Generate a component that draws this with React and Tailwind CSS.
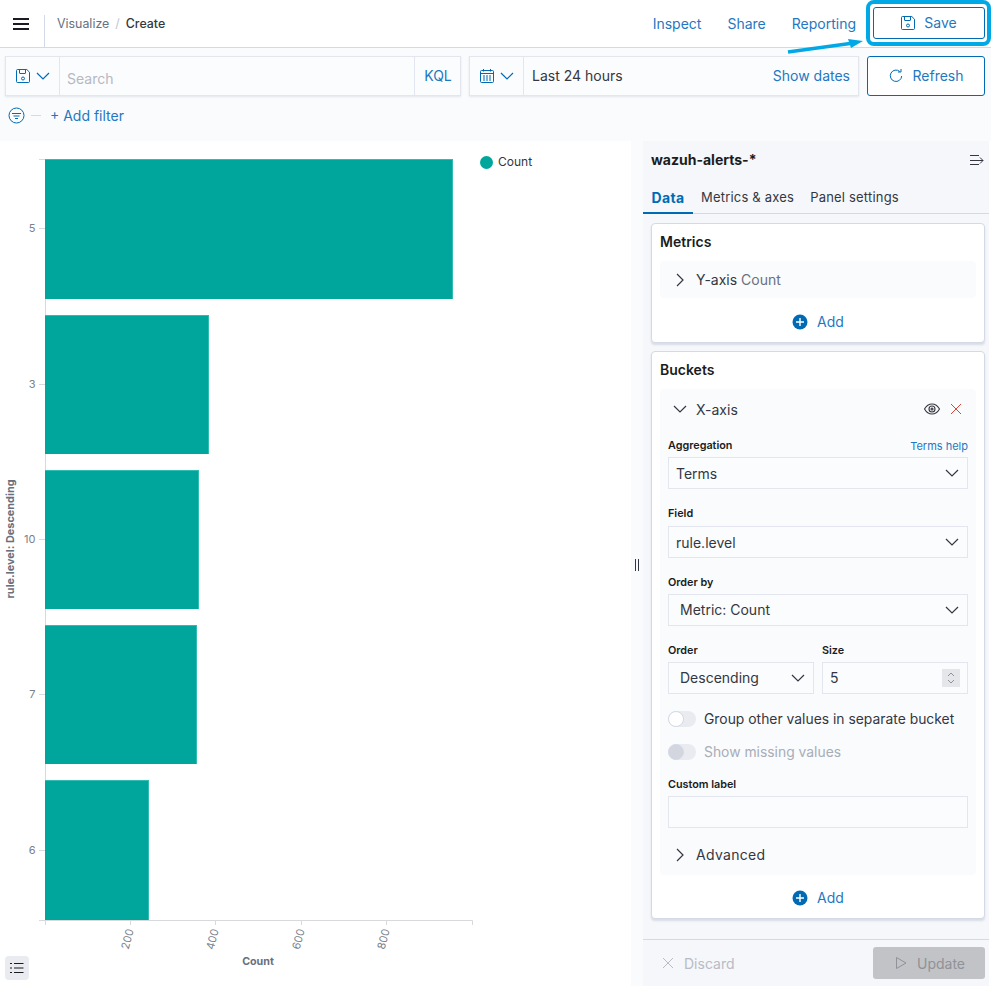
import React from "react";

const BLUE = "#006bb4";

function SaveIcon({ size = 16, color = BLUE }) {
  return (
    <svg width={size} height={size} viewBox="0 0 16 16" fill="none" stroke={color} strokeWidth="1">
      <path d="M1.5 2.5a1 1 0 0 1 1-1h9.3l2.7 2.7v9.3a1 1 0 0 1-1 1h-11a1 1 0 0 1-1-1z" />
      <path d="M4.5 1.500v3.500a.5.5 0 0 0 .5.5h5a.5.5 0 0 0 .5-.5V1.500" />
      <circle cx="8" cy="10.500" r="1.500" />
    </svg>
  );
}

function Chevron({ dir = "down", size = 16, color = "#343741" }) {
  const d = dir === "down" ? "M2 5 8 11l6-6" : "M5 2 11 8l-6 6";
  return (
    <svg width={size} height={size} viewBox="0 0 16 16" fill="none" stroke={color} strokeWidth="1.2">
      <path d={d} />
    </svg>
  );
}

function PlusCircle() {
  return (
    <svg width="16" height="16" viewBox="0 0 16 16">
      <circle cx="8" cy="8" r="7.500" fill={BLUE} />
      <path d="M8 4v8M4 8h8" stroke="#fff" strokeWidth="1.4" />
    </svg>
  );
}

function Label({ children, className = "" }) {
  return <div className={`text-[10.8px] leading-[16px] font-semibold text-[#1a1c21] ${className}`}>{children}</div>;
}

function SelectBox({ children, pad = "pl-[7px]", textClass = "pb-[1px]", className = "" }) {
  return (
    <div className={`h-[32px] bg-[#fbfcfd] border border-[#e3e6ef] flex items-center justify-between ${pad} pr-[7px] text-[14px] text-[#343741] ${className}`}>
      <span className={textClass}>{children}</span>
      <Chevron />
    </div>
  );
}

function Toggle({ disabled, children }) {
  return (
    <div className="h-[20px] flex items-center gap-[8px]">
      <div className="relative w-[28px] h-[16px] rounded-full bg-[#e9ebf0]">
        <div
          className={`absolute left-0 top-0 w-[16px] h-[16px] rounded-full ${
            disabled ? "bg-[#d3d6df] border border-[#d3dae6]" : "bg-white border border-[#d3dae6]"
          }`}
        />
      </div>
      <span className={`text-[13.88px] ${disabled ? "text-[#a8adb8]" : "text-[#343741]"}`}>{children}</span>
    </div>
  );
}

function AddButton() {
  return (
    <div className="flex items-center justify-center gap-[9px] text-[14px] text-[#1f78c1]">
      <PlusCircle />
      <span>Add</span>
    </div>
  );
}

function Chart() {
  const bars = [
    [159, 140, 408],
    [315, 139, 164],
    [470, 139, 154],
    [625, 139, 152],
    [780, 140, 104],
  ];
  const yTicks = [
    [228, "5"],
    [384, "3"],
    [539, "10"],
    [694, "7"],
    [850, "6"],
  ];
  const xTicks = [
    [130, "200"],
    [215, "400"],
    [301, "600"],
    [386, "800"],
  ];
  const font = { fontFamily: "Inter, sans-serif" };
  return (
    <svg width="631" height="845" viewBox="0 141 631 845" className="block">
      <path d="M45.500 159V920.500H472.500V925M39 159.500H45M39 920.500H45M45.500 920V925" fill="none" stroke="#d8d9dc" strokeWidth="1" />
      {bars.map(([y, h, w]) => (
        <g key={y}>
          <rect x="45" y={y} width={w} height={h} fill="#2fbdb3" />
          <rect x="45" y={y + 1} width={w - 1} height={h - 1} fill="#00a69b" />
        </g>
      ))}
      {yTicks.map(([y, t]) => (
        <g key={t}>
          <path d={`M39 ${y + 0.5}H45`} stroke="#d8d9dc" />
          <text x="35.500" y={y + 4} textAnchor="end" fontSize="11" fill="#7a808c" style={font}>
            {t}
          </text>
        </g>
      ))}
      {xTicks.map(([x, t]) => (
        <g key={t}>
          <path d={`M${x + 0.5} 920V925`} stroke="#d8d9dc" />
          <text
            x={x}
            y={929}
            textAnchor="end"
            fontSize="11"
            fill="#7a808c"
            style={font}
            transform={`rotate(-75 ${x} 929) translate(0 4)`}
          >
            {t}
          </text>
        </g>
      ))}
      <text x="258" y="965" textAnchor="middle" fontSize="10.700" fontWeight="700" fill="#69707d" style={font}>
        Count
      </text>
      <text
        x="14"
        y="539"
        textAnchor="middle"
        fontSize="10.900"
        fontWeight="700"
        fill="#69707d"
        style={font}
        transform="rotate(-90 14 539)"
      >
        rule.level: Descending
      </text>
    </svg>
  );
}

export default function App() {
  return (
    <div className="relative w-[991px] h-[986px] overflow-hidden bg-white text-[#343741]" style={{ fontFamily: "Inter, sans-serif" }}>
      {/* Header */}
      <header className="h-[48px] border-b border-[#d3dae6] flex items-stretch">
        <div className="w-[45px] flex items-center pl-[13px] border-r border-[#d3dae6] mt-[15px] pb-[15px] shrink-0">
          <div className="w-[16px] h-[12px] flex flex-col justify-between">
            <div className="h-[2px] bg-[#1a1c21]" />
            <div className="h-[2px] bg-[#1a1c21]" />
            <div className="h-[2px] bg-[#1a1c21]" />
          </div>
        </div>
        <div className="flex items-center pl-[12px] pt-[1px] text-[12.400px]">
          <span className="text-[#69707d]">Visualize</span>
          <span className="text-[#c2c6cf] mx-[6px]">/</span>
          <span className="text-[#343741] font-medium">Create</span>
        </div>
        <div className="ml-auto flex items-center text-[14px] text-[#1f78c1] pb-[1px]">
          <span className="mr-[26px]">Inspect</span>
          <span className="mr-[26px]">Share</span>
          <span className="mr-[17px]">Reporting</span>
          <div className="w-[112px] h-[32px] mr-[6px] mb-[1px] rounded-[3px] border border-[#006bb4] flex items-center justify-center gap-[8px] pr-[1px]">
            <SaveIcon />
            <span>Save</span>
          </div>
        </div>
      </header>

      {/* Annotation overlay */}
      <div className="absolute left-[866px] top-0 w-[125px] h-[46px] rounded-[8px] border-[4px] border-[#00a9e5]" />
      <svg className="absolute left-[785px] top-[36px]" width="85" height="20" viewBox="0 0 85 20">
        <path d="M3 16 65 7.500" stroke="#00a9e5" strokeWidth="3.500" />
        <path d="M63 3 78 5 66 12z" fill="#00a9e5" />
      </svg>

      {/* Query bar */}
      <div className="h-[93px] bg-[#fafbfd] pl-[5px] pr-[6px] pt-[8px]">
        <div className="flex h-[40px] gap-[8px]">
          <div className="w-[456px] flex bg-[#fbfcfd] border border-[#e3e6ef] shadow-[0_1px_2px_rgba(152,162,179,0.25)] text-[14px]">
            <div className="w-[54px] border-r border-[#e3e6ef] flex items-center pl-[9px] gap-[4px]">
              <SaveIcon />
              <Chevron color={BLUE} size={16} />
            </div>
            <div className="flex-1 flex items-center pl-[7px] pt-[4px] text-[#b5b9c2]">Search</div>
            <div className="w-[46px] border-l border-[#e3e6ef] flex items-center justify-center pl-[1px] text-[#1f78c1] pb-[1px]">KQL</div>
          </div>
          <div className="w-[390px] flex bg-[#fbfcfd] border border-[#e3e6ef] shadow-[0_1px_2px_rgba(152,162,179,0.25)] text-[14px]">
            <div className="w-[54px] border-r border-[#e3e6ef] flex items-center pl-[9px] gap-[4px]">
              <svg width="16" height="16" viewBox="0 0 16 16" fill="none" stroke={BLUE}>
                <rect x="1.500" y="2.500" width="13" height="12" rx="1" />
                <path d="M1.500 5.500h13M4.500 1v2.500M11.500 1v2.500" />
                <path d="M4 8h2M7 8h2M10 8h2M4 10h2M7 10h2M10 10h2M4 12h2M7 12h2M10 12h2" strokeWidth="1.2" />
              </svg>
              <Chevron color={BLUE} size={16} />
            </div>
            <div className="flex-1 flex items-center justify-between pl-[8px] pr-[8px] pb-[1px]">
              <span>Last 24 hours</span>
              <span className="text-[#1f78c1]">Show dates</span>
            </div>
          </div>
          <div className="w-[118px] rounded-[3px] border border-[#006bb4] bg-white flex items-center justify-center gap-[8px] pb-[1px] text-[14px] text-[#1f78c1]">
            <svg width="16" height="16" viewBox="0 0 16 16" fill="none" stroke={BLUE}>
              <path d="M11.800 3.500A5.700 5.700 0 1 0 13.700 8" />
              <path d="M10 4h3V1" />
            </svg>
            <span>Refresh</span>
          </div>
        </div>
        <div className="flex items-center h-[20px] mt-[9px] pl-[3px] text-[14px] text-[#1f78c1]">
          <svg width="17" height="17" viewBox="0 0 17 17" fill="none" stroke={BLUE}>
            <circle cx="8.500" cy="8.500" r="7.500" />
            <path d="M4 6.500h9M5.500 9h6M7 11.500h3" />
          </svg>
          <div className="w-[10px] h-px bg-[#d3dae6] ml-[6px]" />
          <span className="ml-[9px]">+ Add filter</span>
        </div>
      </div>

      {/* Main */}
      <div className="flex h-[845px]">
        <div className="relative w-[631px] shrink-0">
          <Chart />
          <div className="absolute left-[5px] top-[815px] w-[24px] h-[24px] rounded-[4px] bg-[#e9ebf0] flex items-center justify-center">
            <svg width="14" height="12" viewBox="0 0 14 12" fill="#1a1c21">
              <path d="M0 1h2v1H0zM0 5.500h2v1H0zM0 10h2v1H0zM4 1h9.500v1H4zM4 5.500h9.500v1H4zM4 10h9.500v1H4z" />
            </svg>
          </div>
          {/* Legend */}
          <div className="absolute left-[480px] top-[12px] flex items-center gap-[5px] text-[12px] text-[#343741]">
            <span className="w-[13px] h-[13px] rounded-full bg-[#00a69b]" />
            <span>Count</span>
          </div>
        </div>

        {/* Resizer */}
        <div className="w-[12px] bg-[#fafbfd] shrink-0 flex items-center justify-center pt-[3px]">
          <div className="flex gap-[2px] h-[12px]">
            <div className="w-px bg-[#343741]" />
            <div className="w-px bg-[#343741]" />
          </div>
        </div>

        {/* Panel */}
        <aside className="w-[346px] shrink-0 bg-[#f5f7fa] flex flex-col">
          <div className="h-[39px] flex items-center justify-between pl-[8px] pr-[4px] pb-[2px]">
            <span className="text-[14px] font-bold text-[#1a1c21]">wazuh-alerts-*</span>
            <svg width="16" height="16" viewBox="0 0 16 16" fill="none" stroke="#343741">
              <path d="M1 3.500h9M1 8.500h13M1 12.500h9M11 5.500l3 3-3 3" />
            </svg>
          </div>
          <div className="h-[34px] border-b border-[#d3dae6] flex items-stretch text-[13px] tracking-[0.2px]">
            <div className="w-[50px] border-b-2 border-[#006bb4] flex items-center justify-center font-bold text-[14px] tracking-[0.3px] text-[#006bb4] h-[34px] pt-[2px]">Data</div>
            <div className="ml-[8px] flex items-center pt-[2px]">Metrics &amp; axes</div>
            <div className="ml-[16px] flex items-center pt-[2px]">Panel settings</div>
          </div>

          <div className="mt-[9px] ml-[8px] mr-[4px] flex flex-col gap-[8px]">
            {/* Metrics */}
            <section className="h-[120px] bg-white border border-[#d3dae6] rounded-[4px] shadow-[0_2px_2px_rgba(152,162,179,0.3)] px-[8px] pt-[9px]">
              <div className="text-[14px] leading-[18px] font-semibold text-[#1a1c21]">Metrics</div>
              <div className="mt-[10px] h-[37px] bg-[#fafbfd] rounded-[4px] flex items-center pl-[12px] text-[14px]">
                <Chevron dir="right" />
                <span className="ml-[8px] pb-[1px]">Y-axis <span className="text-[#69707d]">Count</span></span>
              </div>
              <div className="mt-[13px]"><AddButton /></div>
            </section>

            {/* Buckets */}
            <section className="h-[568px] bg-white border border-[#d3dae6] rounded-[4px] shadow-[0_2px_2px_rgba(152,162,179,0.3)] px-[8px] pt-[9px]">
              <div className="text-[14px] leading-[18px] font-semibold text-[#1a1c21]">Buckets</div>
              <div className="mt-[10px] h-[486px] bg-[#fafbfd] rounded-[4px] px-[8px]">
                <div className="h-[40px] flex items-center pl-[4px] pr-[4px] text-[14px]">
                  <Chevron />
                  <span className="ml-[8px]">X-axis</span>
                  <svg className="ml-auto" width="16" height="16" viewBox="0 0 16 16" fill="none" stroke="#343741" strokeWidth="1.100">
                    <path d="M.5 8C2.500 4.500 5 3 8 3s5.500 1.500 7.500 5c-2 3.500-4.500 5-7.500 5S2.500 11.500.5 8z" />
                    <circle cx="8" cy="8" r="3" />
                    <circle cx="8" cy="8" r="1" />
                  </svg>
                  <svg className="ml-[8px]" width="16" height="16" viewBox="0 0 16 16" fill="none" stroke="#d9453a">
                    <path d="M3 3l10 10M13 3 3 13" />
                  </svg>
                </div>
                <div className="flex justify-between items-end h-[16px] mt-[9px]">
                  <Label>Aggregation</Label>
                  <span className="text-[11px] leading-[16px] text-[#1f78c1]">Terms help</span>
                </div>
                <SelectBox textClass="" className="mt-[3px]">Terms</SelectBox>
                <Label className="mt-[17px]">Field</Label>
                <SelectBox textClass="" className="mt-[4px]">rule.level</SelectBox>
                <Label className="mt-[17px]">Order by</Label>
                <SelectBox pad="pl-[11px]" className="mt-[3px]">Metric: Count</SelectBox>
                <div className="flex gap-[8px] mt-[17px]">
                  <div className="w-[146px]">
                    <Label>Order</Label>
                    <SelectBox pad="pl-[11px]" className="mt-[3px]">Descending</SelectBox>
                  </div>
                  <div className="flex-1">
                    <Label>Size</Label>
                    <div className="mt-[3px] h-[32px] bg-[#fbfcfd] border border-[#e3e6ef] flex items-center justify-between pl-[7px] pr-[7px] text-[14px]">
                      <span className="pb-[1px]">5</span>
                      <div className="w-[18px] h-[18px] bg-[#e4e6ea] flex items-center justify-center">
                        <svg width="12" height="14" viewBox="0 0 12 14" fill="none" stroke="#8d929c">
                          <path d="M3 5 6 2l3 3M3 9l3 3 3-3" />
                        </svg>
                      </div>
                    </div>
                  </div>
                </div>
                <div className="mt-[15px]"><Toggle>Group other values in separate bucket</Toggle></div>
                <div className="mt-[13px]"><Toggle disabled>Show missing values</Toggle></div>
                <Label className="mt-[15px]">Custom label</Label>
                <div className="mt-[3px] h-[32px] bg-[#fbfcfd] border border-[#e3e6ef]" />
                <div className="mt-[16px] h-[22px] flex items-center pl-[4px] text-[14px] tracking-[0.3px]">
                  <Chevron dir="right" />
                  <span className="ml-[8px] pb-[1px]">Advanced</span>
                </div>
              </div>
              <div className="mt-[12px]"><AddButton /></div>
            </section>
          </div>

          <div className="mt-auto h-[47px] border-t border-[#d3dae6] flex items-center justify-between pl-[17px] pr-[4px] text-[14px]">
            <div className="flex items-center gap-[8px] text-[#b8bcc5]">
              <svg width="16" height="16" viewBox="0 0 16 16" fill="none" stroke="#b8bcc5">
                <path d="M3 3l10 10M13 3 3 13" />
              </svg>
              <span>Discard</span>
            </div>
            <div className="w-[112px] h-[32px] rounded-[3px] bg-[#c2c3c6] flex items-center justify-center gap-[8px] text-[#8f9298]">
              <svg width="16" height="16" viewBox="0 0 16 16" fill="none" stroke="#8f9298">
                <path d="M3.500 2.500v11L13 8z" />
              </svg>
              <span>Update</span>
            </div>
          </div>
        </aside>
        <div className="flex-1 bg-white" />
      </div>
    </div>
  );
}
